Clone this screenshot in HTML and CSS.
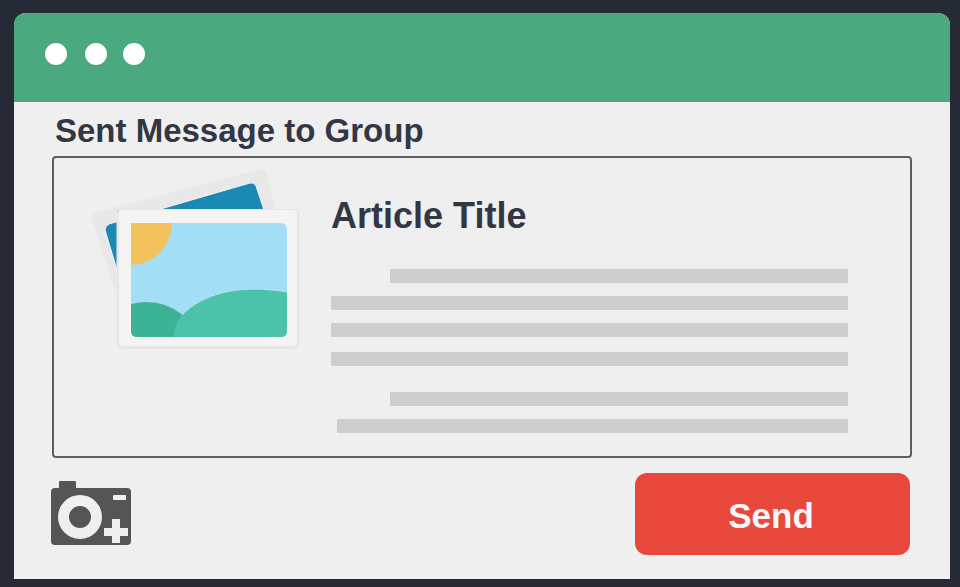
FILE: index.html
```html
<!DOCTYPE html>
<html lang="en">
<head>
  <meta charset="UTF-8" />
  <meta name="viewport" content="width=device-width, initial-scale=1" />
  <title>Sent Message to Group</title>
  <link rel="stylesheet" href="styles.css">
</head>
<body>
  <div class="window">
    <div class="titlebar">
      <span class="dot"></span>
      <span class="dot"></span>
      <span class="dot last"></span>
    </div>
    <div class="content">
      <h1 class="heading">Sent Message to Group</h1>
      <div class="message">
        <svg class="photos" viewBox="90 168 212 184" width="212" height="184">
          <!-- back photo -->
          <path d="M96 212 L259 170 Q265 168 267 174 L276 212 L276 300 L122 312 L92 220 Q91 214 96 212 Z" fill="#e8e8e8"/>
          <path d="M109 224 L250 183 Q254 182 256 186 L264 210 L117 210 L117 270 L105 230 Q105 226 109 224 Z" fill="#1a8ab4" stroke="#f4f2f1" stroke-width="1"/>
          <!-- front photo -->
          <rect x="117" y="209" width="182" height="140" rx="5" fill="#e6e6e6"/>
          <rect x="119" y="210" width="178" height="136" rx="4" fill="#f6f4f3"/>
          <rect x="131" y="223" width="156" height="114" rx="6" fill="#a3def6"/>
          <path d="M131 223 H172 A41 42 0 0 1 131 265 Z" fill="#f2c35c"/>
          <path d="M131 304 Q160 297 183 315 L174 337 H137 Q131 337 131 331 Z" fill="#3cb296"/>
          <path d="M174 337 Q174 324 182 315 C200 296 235 283 287 292 V331 Q287 337 281 337 Z" fill="#4cc2aa"/>
          <path d="M182 315 C200 296 235 283 287 292" fill="none" stroke="#b5e6ee" stroke-width="1"/>
        </svg>
        <div class="article">
          <h2 class="article-title">Article Title</h2>
          <div class="line indent"></div>
          <div class="line"></div>
          <div class="line"></div>
          <div class="line wide-gap"></div>
          <div class="line indent para"></div>
          <div class="line small-indent"></div>
        </div>
      </div>
      <div class="footer">
        <svg class="camera" viewBox="51 480 81 66" width="81" height="66">
          <rect x="59" y="481" width="17" height="8" rx="1" fill="#555"/>
          <rect x="51" y="488" width="80" height="57" rx="4" fill="#555"/>
          <circle cx="80" cy="517" r="16.5" fill="none" stroke="#efefef" stroke-width="11"/>
          <rect x="113" y="495" width="13" height="5" rx="1" fill="#efefef"/>
          <path d="M112 519 H120 V528 H128 V536 H120 V543 H112 V536 H104 V528 H112 Z" fill="#efefef"/>
        </svg>
        <button class="send-btn">Send</button>
      </div>
    </div>
  </div>
</body>
</html>
```

FILE: styles.css
```css
html, body {
  height: 100%;
}
body {
  margin: 0;
  background-color: #262a35;
  font-family: "Liberation Sans", Arial, sans-serif;
  overflow: hidden;
}
.window {
  margin: 13px 10px 0 14px;
  height: 566px;
  background: #efefef;
  border-radius: 12px 12px 0 0;
  overflow: hidden;
}
.titlebar {
  height: 89px;
  background-color: #4aa97e;
  display: flex;
  align-items: center;
  padding: 0 0 8px 31px;
  gap: 18px;
  box-sizing: border-box;
}
.dot {
  width: 22px;
  height: 22px;
  border-radius: 50%;
  background: white;
}
.dot.last {
  margin-left: -2px;
}
.content {
  padding: 0 38px;
}
.heading {
  margin: 0 0 0 3px;
  height: 54px;
  line-height: 58px;
  font-size: 33px;
  font-weight: bold;
  color: #333743;
}
.message {
  height: 302px;
  box-sizing: border-box;
  border: 2px solid #5f5f5f;
  border-radius: 4px;
  display: flex;
  padding: 10px 0 0 36px;
}
.photos {
  flex: none;
}
.article {
  margin-left: 29px;
  width: 517px;
}
.article-title {
  margin: 24px 0 30px;
  height: 47px;
  line-height: 47px;
  font-size: 36px;
  font-weight: bold;
  color: #333743;
}
.line {
  height: 14px;
  background: #cdcdcd;
  margin-bottom: 13px;
}
.line.indent {
  margin-left: 59px;
}
.line.small-indent {
  margin-left: 6px;
}
.line.wide-gap {
  margin-top: 15px;
}
.line.para {
  margin-top: 26px;
}
.footer {
  margin: 15px 2px 0 -1px;
  display: flex;
  justify-content: space-between;
  align-items: flex-start;
}
.camera {
  margin-top: 7px;
}
.send-btn {
  width: 275px;
  height: 82px;
  padding: 4px 3px 0 0;
  border: none;
  border-radius: 12px;
  background-color: #e8483c;
  color: #f7f7f7;
  font-family: "Liberation Sans", Arial, sans-serif;
  font-size: 35px;
  font-weight: bold;
}
```
